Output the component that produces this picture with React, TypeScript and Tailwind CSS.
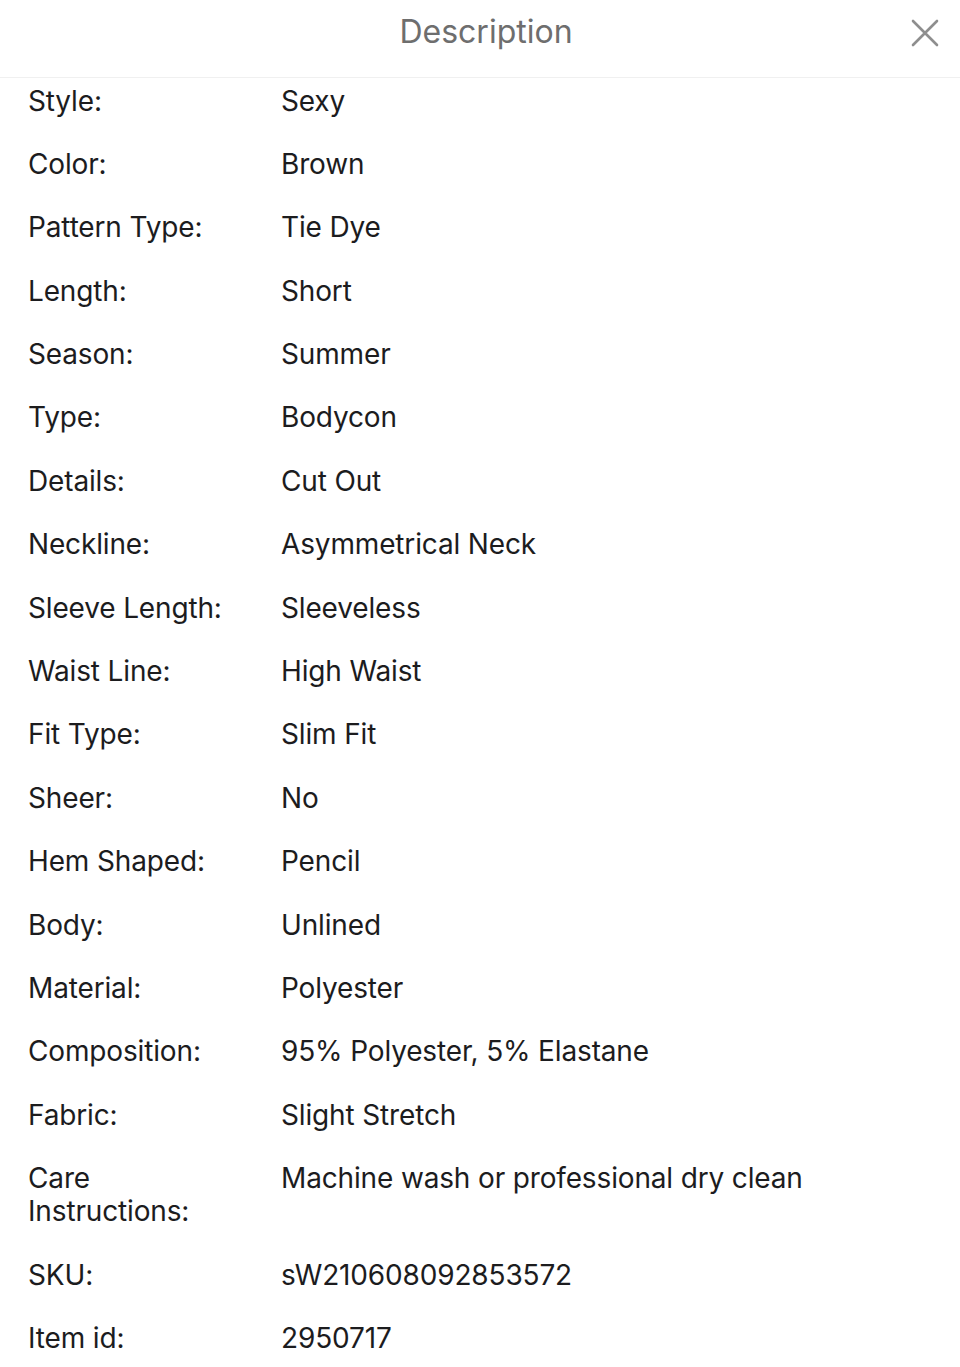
const ROWS: [string, string][] = [
  ["Style:", "Sexy"],
  ["Color:", "Brown"],
  ["Pattern Type:", "Tie Dye"],
  ["Length:", "Short"],
  ["Season:", "Summer"],
  ["Type:", "Bodycon"],
  ["Details:", "Cut Out"],
  ["Neckline:", "Asymmetrical Neck"],
  ["Sleeve Length:", "Sleeveless"],
  ["Waist Line:", "High Waist"],
  ["Fit Type:", "Slim Fit"],
  ["Sheer:", "No"],
  ["Hem Shaped:", "Pencil"],
  ["Body:", "Unlined"],
  ["Material:", "Polyester"],
  ["Composition:", "95% Polyester, 5% Elastane"],
  ["Fabric:", "Slight Stretch"],
  ["Care Instructions:", "Machine wash or professional dry clean"],
  ["SKU:", "sW210608092853572"],
  ["Item id:", "2950717"],
];

export default function App() {
  return (
    <div className="min-h-[1367px] w-[960px] bg-white font-['Inter',sans-serif] text-[#1c1c1e]">
      <header className="relative flex h-[78px] items-center justify-center border-b border-[#f0f0f0] pb-[14px] pl-[12px]">
        <h1 className="text-[32px] font-normal text-[#6e6e6e]">Description</h1>
        <button className="absolute right-[19px] top-[17px] p-[2px] text-[#8e8e8e]" aria-label="Close">
          <svg width="28" height="28" viewBox="0 0 28 28" fill="none" stroke="currentColor" strokeWidth="2.6" strokeLinecap="round">
            <path d="M2 2L26 26M26 2L2 26" />
          </svg>
        </button>
      </header>

      <dl className="flex flex-col gap-[30.4px] pl-[28px] pr-[20px] pt-[6.5px] tracking-[-0.15px]">
        {ROWS.map(([label, value]) => (
          <div key={label} className="grid grid-cols-[253px_1fr] text-[28px] leading-[33px]">
            <dt className={label === "Care Instructions:" ? "w-[200px]" : ""}>{label}</dt>
            <dd>{value}</dd>
          </div>
        ))}
      </dl>
    </div>
  );
}
